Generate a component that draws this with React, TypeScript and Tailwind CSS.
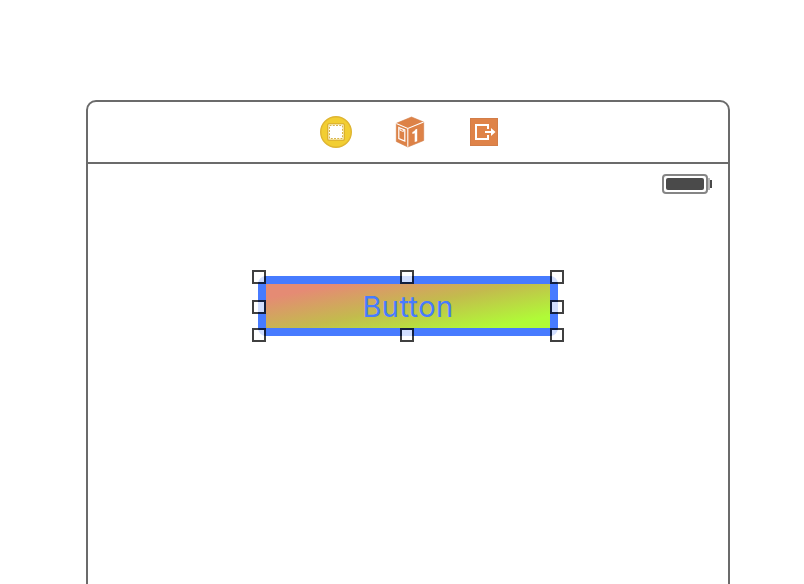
import React from "react";

const handles = [
  "left-[-6px] top-[-6px]",
  "left-[142px] top-[-6px]",
  "left-[292px] top-[-6px]",
  "left-[-6px] top-6",
  "left-[292px] top-6",
  "left-[-6px] top-[52px]",
  "left-[142px] top-[52px]",
  "left-[292px] top-[52px]",
];

function ControllerIcon() {
  return (
    <svg className="h-8 w-8" viewBox="0 0 32 32" fill="none">
      <circle cx="16" cy="16" r="15.3" fill="#f2ce32" stroke="#dfb532" strokeWidth="1.4" />
      <rect x="7.8" y="7.8" width="16.4" height="16.4" rx="1" fill="#edcb38" stroke="#d9ad30" strokeWidth="1.3" />
      <rect x="8.5" y="8.5" width="15" height="15" fill="#fff" />
      <rect x="9.5" y="9.5" width="13" height="13" stroke="#d9b548" strokeDasharray="2 1.25" />
    </svg>
  );
}

function ResponderIcon() {
  return (
    <svg className="h-8 w-8" viewBox="0 0 32 32" fill="none">
      <path d="M2.3 7.3 17.5 1 29.7 6v18.5L13.8 31 2.3 25.5Z" fill="#dd8247" stroke="#d27d48" strokeWidth=".6" />
      <path d="m2.3 7.6 11.5 4.9L29.6 6M13.8 12.5v18.2" stroke="#fff" strokeWidth="1.1" />
      <path d="m4.8 11.5 6 2.5v11l-6-2.5Z" stroke="#fff" strokeWidth="1.2" />
      <path d="M6 12.3v1.9l3.4 1.4v-2" stroke="#fff" strokeWidth=".9" />
      <path d="M18.4 16c1.6-.5 2.5-1.3 2.9-2.5l1.9-.7v12.5l-2.5.8v-8.8l-2.3.8Z" fill="#fff" />
    </svg>
  );
}

function ExitIcon() {
  return (
    <svg className="h-7 w-7" viewBox="0 0 28 28" fill="none">
      <rect x=".5" y=".5" width="27" height="27" fill="#df8348" stroke="#d27d48" />
      <path d="M18 11V7H6v14h12v-4" stroke="#fff" strokeWidth="2" />
      <path d="M15 13h6v-3l4.5 4-4.5 4v-3h-6Z" fill="#fff" />
    </svg>
  );
}

function Battery() {
  return (
    <div className="flex items-center">
      <div className="h-5 w-[46px] rounded-[4px] border-2 border-[#858585] p-[2px]">
        <div className="h-full rounded-[2px] bg-[#4a4a4a]" />
      </div>
      <div className="h-3 w-[2px] bg-[#b8b8b8]" />
      <div className="h-2 w-[2px] bg-[#4a4a4a]" />
    </div>
  );
}

export default function App() {
  return (
    <main className="h-[584px] w-[804px] overflow-hidden bg-white pl-[86px] pt-[100px]">
      <div className="h-[520px] w-[644px] rounded-t-[10px] border-2 border-[#6b6b6b]">
        <header className="flex h-[62px] items-center justify-center gap-[42px] border-b-2 border-[#6b6b6b] pl-1">
          <ControllerIcon />
          <ResponderIcon />
          <div className="flex w-8 justify-center">
            <ExitIcon />
          </div>
        </header>
        <div className="flex justify-end pr-4 pt-[10px]">
          <Battery />
        </div>
        <div className="relative ml-[170px] mt-[82px] h-[60px] w-[300px]">
          <button className="flex h-full w-full items-center justify-center rounded-[8px] border-8 border-[#477bff] bg-[linear-gradient(to_bottom_right,#e58b74_20%,#c3bb4d_50%,#b0fb37_82%)] bg-origin-border font-['Inter',sans-serif] text-[29px] leading-none tracking-[0.4px] text-[#477bff]">
            <span>Button</span>
          </button>
          {handles.map((place) => (
            <span
              key={place}
              className={`absolute h-[14px] w-[14px] border-2 border-black/75 bg-white/75 bg-clip-padding ${place}`}
            />
          ))}
        </div>
      </div>
    </main>
  );
}
